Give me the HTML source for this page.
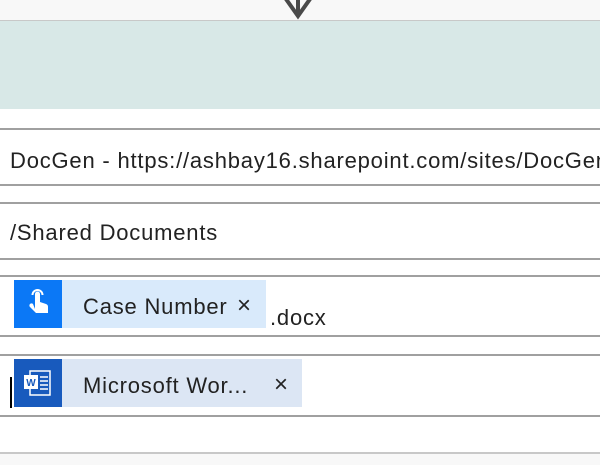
<!DOCTYPE html>
<html><head><style>
body{margin:0;width:600px;height:465px;overflow:hidden;background:#fff;font-family:"Liberation Sans",sans-serif;position:relative;color:#222}
div{position:absolute}
.l{left:0;width:600px;height:2px;background:#a0a0a0}
.t{font-size:22px;letter-spacing:0.8px;white-space:nowrap;left:10px}
.c{font-size:22px;letter-spacing:0.8px;white-space:nowrap}
</style></head><body>
<div style="left:0;top:0;width:600px;height:20px;background:#f8f8f8"></div>
<svg style="position:absolute;left:278px;top:0" width="42" height="20"><path d="M3,-8 L20,16 L37,-8" stroke="#4a4a4a" stroke-width="4" fill="none"/><path d="M20,-5 V16" stroke="#4a4a4a" stroke-width="4"/></svg>
<div style="left:0;top:20px;width:600px;height:1px;background:#c8c8c8"></div>
<div style="left:0;top:21px;width:600px;height:88px;background:#d8e8e7"></div>
<div class="l" style="top:128px"></div>
<div class="t" style="top:148px">DocGen - https://ashbay16.sharepoint.com/sites/DocGen</div>
<div class="l" style="top:184px"></div>
<div class="l" style="top:202px"></div>
<div class="t" style="top:220px">/Shared Documents</div>
<div class="l" style="top:258px"></div>
<div class="l" style="top:275px"></div>
<div style="left:14px;top:280px;width:252px;height:48px;background:#d9eafb"></div>
<div style="left:14px;top:280px;width:48px;height:48px;background:#0b78f6"></div>
<svg style="position:absolute;left:14px;top:280px" width="48" height="48"><path d="M21,29 V14 a2.5,2.5 0 0 1 5,0 V22 l6,2 a3,3 0 0 1 2,3 v6 h-12 l-6,-6 a2,2 0 0 1 3,-3 z" fill="#fff"/><path d="M18.5,15 a5,5 0 1 1 10,0" stroke="#fff" stroke-width="2" fill="none"/></svg>
<div class="c" style="left:83px;top:294px">Case Number</div>
<div style="left:237px;top:292px;font-size:24px">×</div>
<div class="c" style="left:270px;top:305px">.docx</div>
<div class="l" style="top:335px"></div>
<div class="l" style="top:354px"></div>
<div style="left:14px;top:359px;width:288px;height:48px;background:#dce6f4"></div>
<div style="left:14px;top:359px;width:48px;height:48px;background:#185abd"></div>
<svg style="position:absolute;left:14px;top:359px" width="48" height="48"><rect x="16" y="12" width="20" height="24" fill="none" stroke="#fff" stroke-width="1.5"/><path d="M26,18h8M26,22h8M26,26h8M26,30h8" stroke="#fff" stroke-width="1.5"/><rect x="10" y="16" width="14" height="14" fill="#fff"/><text x="17" y="27" font-size="10" font-weight="bold" fill="#185abd" text-anchor="middle" font-family="Liberation Sans">W</text></svg>
<div style="left:10px;top:377px;width:2px;height:31px;background:#000"></div>
<div class="c" style="left:83px;top:373px">Microsoft Wor...</div>
<div style="left:274px;top:371px;font-size:24px">×</div>
<div class="l" style="top:415px"></div>
<div style="left:0;top:452px;width:600px;height:2px;background:#c8c8c8"></div>
<div style="left:0;top:454px;width:600px;height:11px;background:#f8f8f8"></div>
</body></html>
